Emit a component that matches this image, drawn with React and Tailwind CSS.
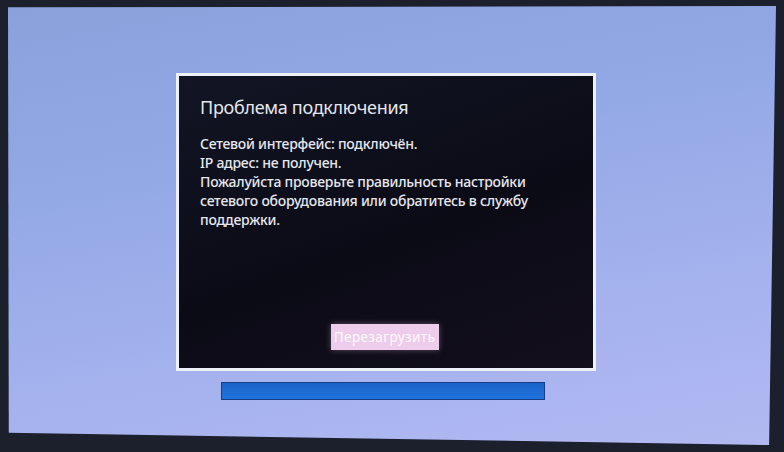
export default function App() {
  return (
    <div className="w-[784px] h-[452px] bg-[#1c1f2c] pt-[6px] pl-[8px] overflow-hidden">
      {/* TV screen, slightly tilted in the frame */}
      <div
        className="w-[768px] h-[439px] bg-[linear-gradient(170deg,#8aa1dc_0%,#93a9e6_35%,#a5b2ee_70%,#b2b9f1_100%)] flex flex-col"
        style={{ clipPath: 'polygon(0 0.3%, 100% 0, 99.1% 100%, 0.1% 97.2%)' }}
      >
        <div
          className="mt-[67px] ml-[168px] w-[420px] h-[298px] border-[3px] border-[#eef0f7] bg-[linear-gradient(160deg,#121524_0%,#0b0b16_55%,#130f1c_100%)] flex flex-col pl-[21px] pr-[16px] pt-[18px] text-[#e6e7ee]"
          style={{ fontFamily: '"Noto Sans", "Open Sans", sans-serif' }}
        >
          <h1 className="text-[18px] leading-[26px] tracking-[-0.3px]">Проблема подключения</h1>
          <div className="mt-[14px] text-[14px] leading-[19px] font-medium tracking-[-0.25px]">
            <p>Сетевой интерфейс: подключён.</p>
            <p>IP адрес: не получен.</p>
            <p>Пожалуйста проверьте правильность настройки</p>
            <p>сетевого оборудования или обратитесь в службу</p>
            <p>поддержки.</p>
          </div>
          <div className="flex-1" />
          <div className="flex justify-center mb-[18px] pr-[8px]">
            <button className="w-[108px] h-[26px] bg-[#edcdeb] text-[#fdf8fd] text-[13.5px] tracking-[0.4px] shadow-[0_0_6px_rgba(233,190,230,0.35)]">
              Перезагрузить
            </button>
          </div>
        </div>
        <div className="mt-[11px] ml-[213px] w-[324px] h-[18px] bg-[linear-gradient(180deg,#1b63c9,#1f72dc)] border border-[#143f86]" />
      </div>
    </div>
  )
}
